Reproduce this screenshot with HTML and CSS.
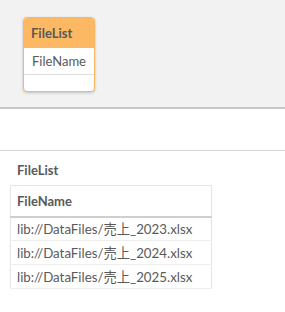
FILE: index.html
```html
<!DOCTYPE html>
<html lang="ja">
<head>
    <meta charset="UTF-8" />
    <meta name="viewport" content="width=device-width, initial-scale=1" />
    <title>FileList</title>
    <link rel="stylesheet" href="styles.css">
</head>
<body>

    <!-- Data model viewer -->
    <div class="model">
        <div class="table-card">
            <div class="card-head">FileList</div>
            <div class="card-field">FileName</div>
            <div class="card-empty"></div>
        </div>
    </div>

    <div class="gap"></div>

    <!-- Preview -->
    <div class="preview">
        <h3>FileList</h3>
        <table class="grid">
            <thead>
                <tr><th>FileName</th></tr>
            </thead>
            <tbody>
                <tr><td>lib://DataFiles/売上_2023.xlsx</td></tr>
                <tr><td>lib://DataFiles/売上_2024.xlsx</td></tr>
                <tr><td>lib://DataFiles/売上_2025.xlsx</td></tr>
            </tbody>
        </table>
    </div>

</body>
</html>
```

FILE: styles.css
```css
* {
    margin: 0;
    padding: 0;
    box-sizing: border-box;
}
body {
    font-family: Lato, "Noto Sans CJK JP", sans-serif;
    font-size: 13px;
    color: #595959;
    background: #ffffff;
}
.model {
    height: 109px;
    background-color: #f2f2f2;
    border-bottom: 2px solid #c6c6c6;
    padding: 17px 0 0 23px;
}
.table-card {
    width: 72px;
    background-color: #ffffff;
    border: 1px solid #f7b765;
    border-radius: 4px;
    box-shadow: 0 1px 3px rgba(0, 0, 0, 0.2);
    overflow: hidden;
}
.card-head {
    height: 30px;
    line-height: 30px;
    padding-left: 7px;
    background-color: #fcb862;
    font-weight: 700;
}
.card-field {
    height: 27px;
    line-height: 26px;
    text-align: center;
    border-bottom: 1px solid #dddddd;
}
.card-empty {
    height: 16px;
}
.gap {
    height: 42px;
    border-bottom: 1px solid #d3d3d3;
}
.preview {
    padding: 11px 0 0 10px;
}
h3 {
    font-size: 13px;
    font-weight: 700;
    padding-left: 7px;
    height: 23px;
    line-height: 16px;
}
.grid {
    border-collapse: collapse;
    width: 202px;
    border: 1px solid #e4e4e4;
}
.grid th {
    height: 31px;
    text-align: left;
    font-weight: 700;
    padding: 0 6px;
    border-bottom: 2px solid #cfcfcf;
}
.grid td {
    height: 24px;
    padding: 0 6px;
    font-size: 13.3px;
    border-bottom: 1px solid #eeeeee;
    white-space: nowrap;
}
```
